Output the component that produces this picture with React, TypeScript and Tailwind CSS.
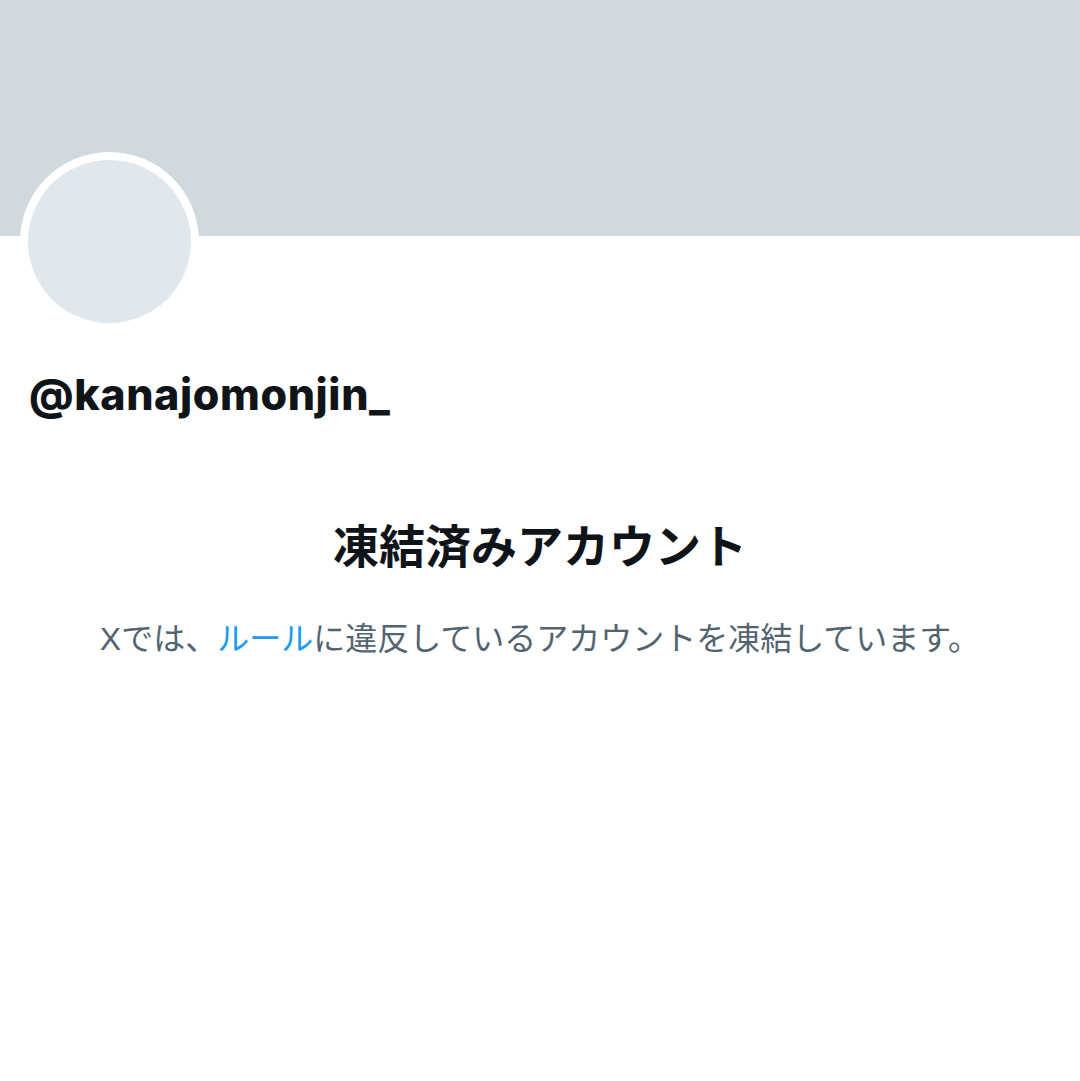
import React from "react";

export default function App() {
  const font = { fontFamily: '"Liberation Sans", "Noto Sans CJK JP", sans-serif' };
  const inter = { fontFamily: 'Inter, "Liberation Sans", sans-serif' };
  return (
    <div className="w-[1080px] h-[1081px] bg-white overflow-hidden" style={font}>
      <div className="h-[236px] bg-[#cfd9de]" />
      <div className="relative px-[20px]">
        <div className="-mt-[84px] w-[179px] h-[179px] rounded-full bg-white p-[8px]">
          <div className="w-full h-full rounded-full bg-[#e1e8ed]" />
        </div>
        <div className="mt-[38px] pl-[9px] text-[43px] leading-[50px] font-extrabold text-[#0f1419] tracking-[0.6px]" style={inter}>
          @kanajomonjin_
        </div>
      </div>
      <div className="mt-[100px] flex flex-col items-center">
        <div className="text-[46px] leading-[56px] font-bold text-[#0f1419]">凍結済みアカウント</div>
        <div className="mt-[44px] text-[32px] leading-[40px] text-[#536471]">
          Xでは、<span className="text-[#1d9bf0]">ルール</span>に違反しているアカウントを凍結しています。
        </div>
      </div>
    </div>
  );
}
